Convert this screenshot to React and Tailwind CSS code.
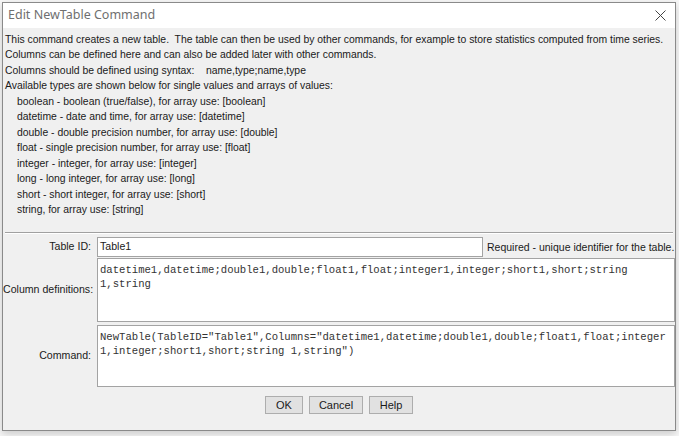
import React from 'react';

const typeLines = [
  'boolean - boolean (true/false), for array use: [boolean]',
  'datetime - date and time, for array use: [datetime]',
  'double - double precision number, for array use: [double]',
  'float - single precision number, for array use: [float]',
  'integer - integer, for array use: [integer]',
  'long - long integer, for array use: [long]',
  'short - short integer, for array use: [short]',
  'string, for array use: [string]',
];

const uiFont = { fontFamily: '"Liberation Sans", Arial, sans-serif' };
const monoFont = { fontFamily: '"Liberation Mono", "Courier New", monospace' };

function CloseIcon() {
  return (
    <svg width="11" height="11" viewBox="0 0 11 11" className="shrink-0">
      <path d="M0.5 0.5 L10.5 10.5 M10.5 0.5 L0.5 10.5" stroke="#444" strokeWidth="1" fill="none" />
    </svg>
  );
}

function Button({ label, width }) {
  return (
    <button
      className={`h-[18px] ${width} bg-[#e1e1e1] border border-[#adadad] text-[11px] text-[#1a1a1a] leading-none`}
      style={uiFont}
    >
      {label}
    </button>
  );
}

function FormLabel({ children }) {
  return (
    <div className="w-[89px] shrink-0 text-right text-[10.6px] text-[#1a1a1a] whitespace-nowrap pr-[1px]">
      {children}
    </div>
  );
}

function MonoBox({ lines, height }) {
  return (
    <div
      className={`flex-1 ${height} bg-white border border-[#a3a3a3] pl-[2px] pt-[4px] text-[10.6px] leading-[14px] text-[#333] whitespace-pre overflow-hidden`}
      style={monoFont}
    >
      {lines.map((l) => (
        <div key={l}>{l}</div>
      ))}
    </div>
  );
}

export default function App() {
  return (
    <div className="w-[679px] h-[436px] bg-[#f7f7f7] pt-[2px] pl-[2px] overflow-hidden">
      <div
        className="w-[674px] h-[429px] border border-[#8a8a8a] bg-[#f0f0f0] flex flex-col shadow-[0_3px_8px_rgba(0,0,0,0.18)]"
        style={uiFont}
      >
        {/* title bar */}
        <div className="h-[25px] bg-white flex items-center justify-between pl-[5px] pr-[9px]">
          <span
            className="text-[12.5px] text-[#6f6f6f]"
            style={{ fontFamily: '"Noto Sans", "Open Sans", sans-serif' }}
          >
            Edit NewTable Command
          </span>
          <CloseIcon />
        </div>

        {/* description */}
        <div className="pt-[4px] pl-[2px] text-[10.4px] leading-[15.45px] text-[#1a1a1a] whitespace-pre">
          <div>This command creates a new table.  The table can then be used by other commands, for example to store statistics computed from time series.</div>
          <div>Columns can be defined here and can also be added later with other commands.</div>
          <div>Columns should be defined using syntax:    name,type;name,type</div>
          <div>Available types are shown below for single values and arrays of values:</div>
          {typeLines.map((t) => (
            <div key={t} className="pl-[12px]">{t}</div>
          ))}
        </div>

        <div className="mt-[15px] mx-[2px] border-t border-[#a0a0a0] border-b border-b-white" />

        {/* form */}
        <div className="pt-[3px] flex flex-col">
          <div className="flex items-center gap-[5px]">
            <FormLabel>Table ID:</FormLabel>
            <div className="w-[386px] shrink-0 h-[20px] bg-white border border-[#a3a3a3] flex items-center pl-[2px] text-[10.6px] text-[#1a1a1a]">
              Table1
            </div>
            <span className="text-[10.5px] text-[#1a1a1a] whitespace-nowrap -ml-[1px]">
              Required - unique identifier for the table.
            </span>
          </div>

          <div className="flex items-center gap-[5px] mt-[1px]">
            <FormLabel>Column definitions:</FormLabel>
            <MonoBox
              height="h-[64px]"
              lines={[
                'datetime1,datetime;double1,double;float1,float;integer1,integer;short1,short;string',
                '1,string',
              ]}
            />
          </div>

          <div className="flex items-center gap-[5px] mt-[3px]">
            <FormLabel>Command:</FormLabel>
            <MonoBox
              height="h-[62px]"
              lines={[
                'NewTable(TableID="Table1",Columns="datetime1,datetime;double1,double;float1,float;integer',
                '1,integer;short1,short;string 1,string")',
              ]}
            />
          </div>

          <div className="flex justify-center gap-[6px] mt-[9px]">
            <Button label="OK" width="w-[38px]" />
            <Button label="Cancel" width="w-[54px]" />
            <Button label="Help" width="w-[44px]" />
          </div>
        </div>
      </div>
    </div>
  );
}
